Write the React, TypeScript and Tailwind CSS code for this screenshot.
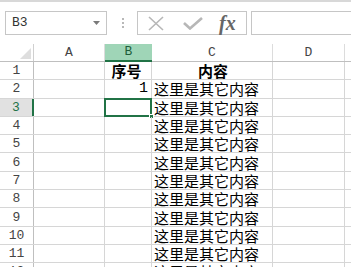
import React from "react";

const mono = { fontFamily: '"Liberation Mono", monospace' };
const cjk = { fontFamily: '"Noto Sans CJK SC", sans-serif' };

const rows = [1, 2, 3, 4, 5, 6, 7, 8, 9, 10, 11, 12];

const Toolbar = () => (
  <div className="flex items-center h-[24px] mt-[9px]">
    <div className="ml-[5px] w-[102px] h-[24px] border border-[#c6c6c6] flex items-center justify-between pl-[6px] pr-[6px]">
      <span className="text-[13px] text-[#333]" style={mono}>
        B3
      </span>
      <svg width="7" height="4" viewBox="0 0 7 4">
        <path d="M0 0 L7 0 L3.5 4 Z" fill="#7a7a7a" />
      </svg>
    </div>
    <div className="ml-[14px] w-[3px] flex flex-col gap-[2px] items-center">
      <div className="w-[2px] h-[2px] bg-[#b8b8b8]" />
      <div className="w-[2px] h-[2px] bg-[#b8b8b8]" />
      <div className="w-[2px] h-[2px] bg-[#b8b8b8]" />
    </div>
    <div className="ml-[13px] w-[110px] h-[24px] border border-[#c6c6c6] flex items-center">
      <svg width="16" height="15" viewBox="0 0 16 15" className="ml-[10px]">
        <path d="M1 1 L15 14 M15 1 L1 14" stroke="#b7b7b7" strokeWidth="1.6" />
      </svg>
      <svg width="20" height="13" viewBox="0 0 20 13" className="ml-[19px]">
        <path d="M1 6 L7 11.5 L19 1" stroke="#b7b7b7" strokeWidth="2.6" fill="none" />
      </svg>
      <span
        className="ml-[16px] text-[20px] italic font-bold text-[#666] leading-none"
        style={{ fontFamily: '"Liberation Serif", serif' }}
      >
        fx
      </span>
    </div>
    <div className="ml-[4px] flex-1 h-[24px] border border-[#c6c6c6] border-r-0" />
  </div>
);

const HeaderRow = () => (
  <div className="flex h-[18px] border-b border-[#bfbfbf] text-[13px] text-[#444]" style={mono}>
    <div className="w-[34px] shrink-0 border-r border-[#d0d0d0] relative">
      <svg width="11" height="11" viewBox="0 0 11 11" className="absolute left-[20px] top-[4px]">
        <path d="M11 0 L11 11 L0 11 Z" fill="#dedede" />
      </svg>
    </div>
    <div className="w-[71px] shrink-0 border-r border-[#dcdcdc] flex items-center justify-center">A</div>
    <div className="w-[47px] shrink-0 bg-[#9fd5b7] border-b-2 border-[#217346] -mb-[1px] flex items-center justify-center text-[#1e5e3a]">
      B
    </div>
    <div className="w-[121px] shrink-0 border-r border-[#dcdcdc] flex items-center justify-center">C</div>
    <div className="w-[72px] shrink-0 border-r border-[#dcdcdc] flex items-center justify-center">D</div>
    <div className="flex-1" />
  </div>
);

const DataRow = ({ n }: { n: number }) => {
  const sel = n === 3;
  return (
    <div className="flex h-[18.3px] border-b border-[#d6d6d6] text-[15px] text-black leading-none">
      <div
        className={`w-[34px] shrink-0 flex items-center justify-center text-[13px] ${
          sel ? "bg-[#e1e1e1] text-[#217346] border-r-2 border-[#217346]" : "text-[#444] border-r border-[#bfbfbf]"
        }`}
        style={mono}
      >
        {n}
      </div>
      <div className="w-[71px] shrink-0 border-r border-[#d6d6d6]" />
      <div className="w-[47px] shrink-0 border-r border-[#d6d6d6] relative flex items-center justify-end pr-[3px]">
        {n === 1 && (
          <span className="font-bold w-full text-center" style={cjk}>
            序号
          </span>
        )}
        {n === 2 && <span style={mono}>1</span>}
        {sel && (
          <>
            <div className="absolute -left-[1px] -top-[1px] right-[-1px] bottom-[-1px] border-2 border-[#217346]" />
            <div className="absolute right-[-3px] bottom-[-3px] w-[5px] h-[5px] bg-[#217346] border border-white" />
          </>
        )}
      </div>
      <div className="w-[121px] shrink-0 border-r border-[#d6d6d6] flex items-center pl-[2px]" style={cjk}>
        {n === 1 ? (
          <span className="font-bold w-full text-center">内容</span>
        ) : (
          <span>这里是其它内容</span>
        )}
      </div>
      <div className="w-[72px] shrink-0 border-r border-[#d6d6d6]" />
      <div className="flex-1" />
    </div>
  );
};

export default function App() {
  return (
    <div className="w-[351px] h-[267px] overflow-hidden bg-white border-t-2 border-[#d8d8d8]">
      <Toolbar />
      <div className="mt-[9px]">
        <HeaderRow />
        {rows.map((n) => (
          <DataRow key={n} n={n} />
        ))}
      </div>
    </div>
  );
}
